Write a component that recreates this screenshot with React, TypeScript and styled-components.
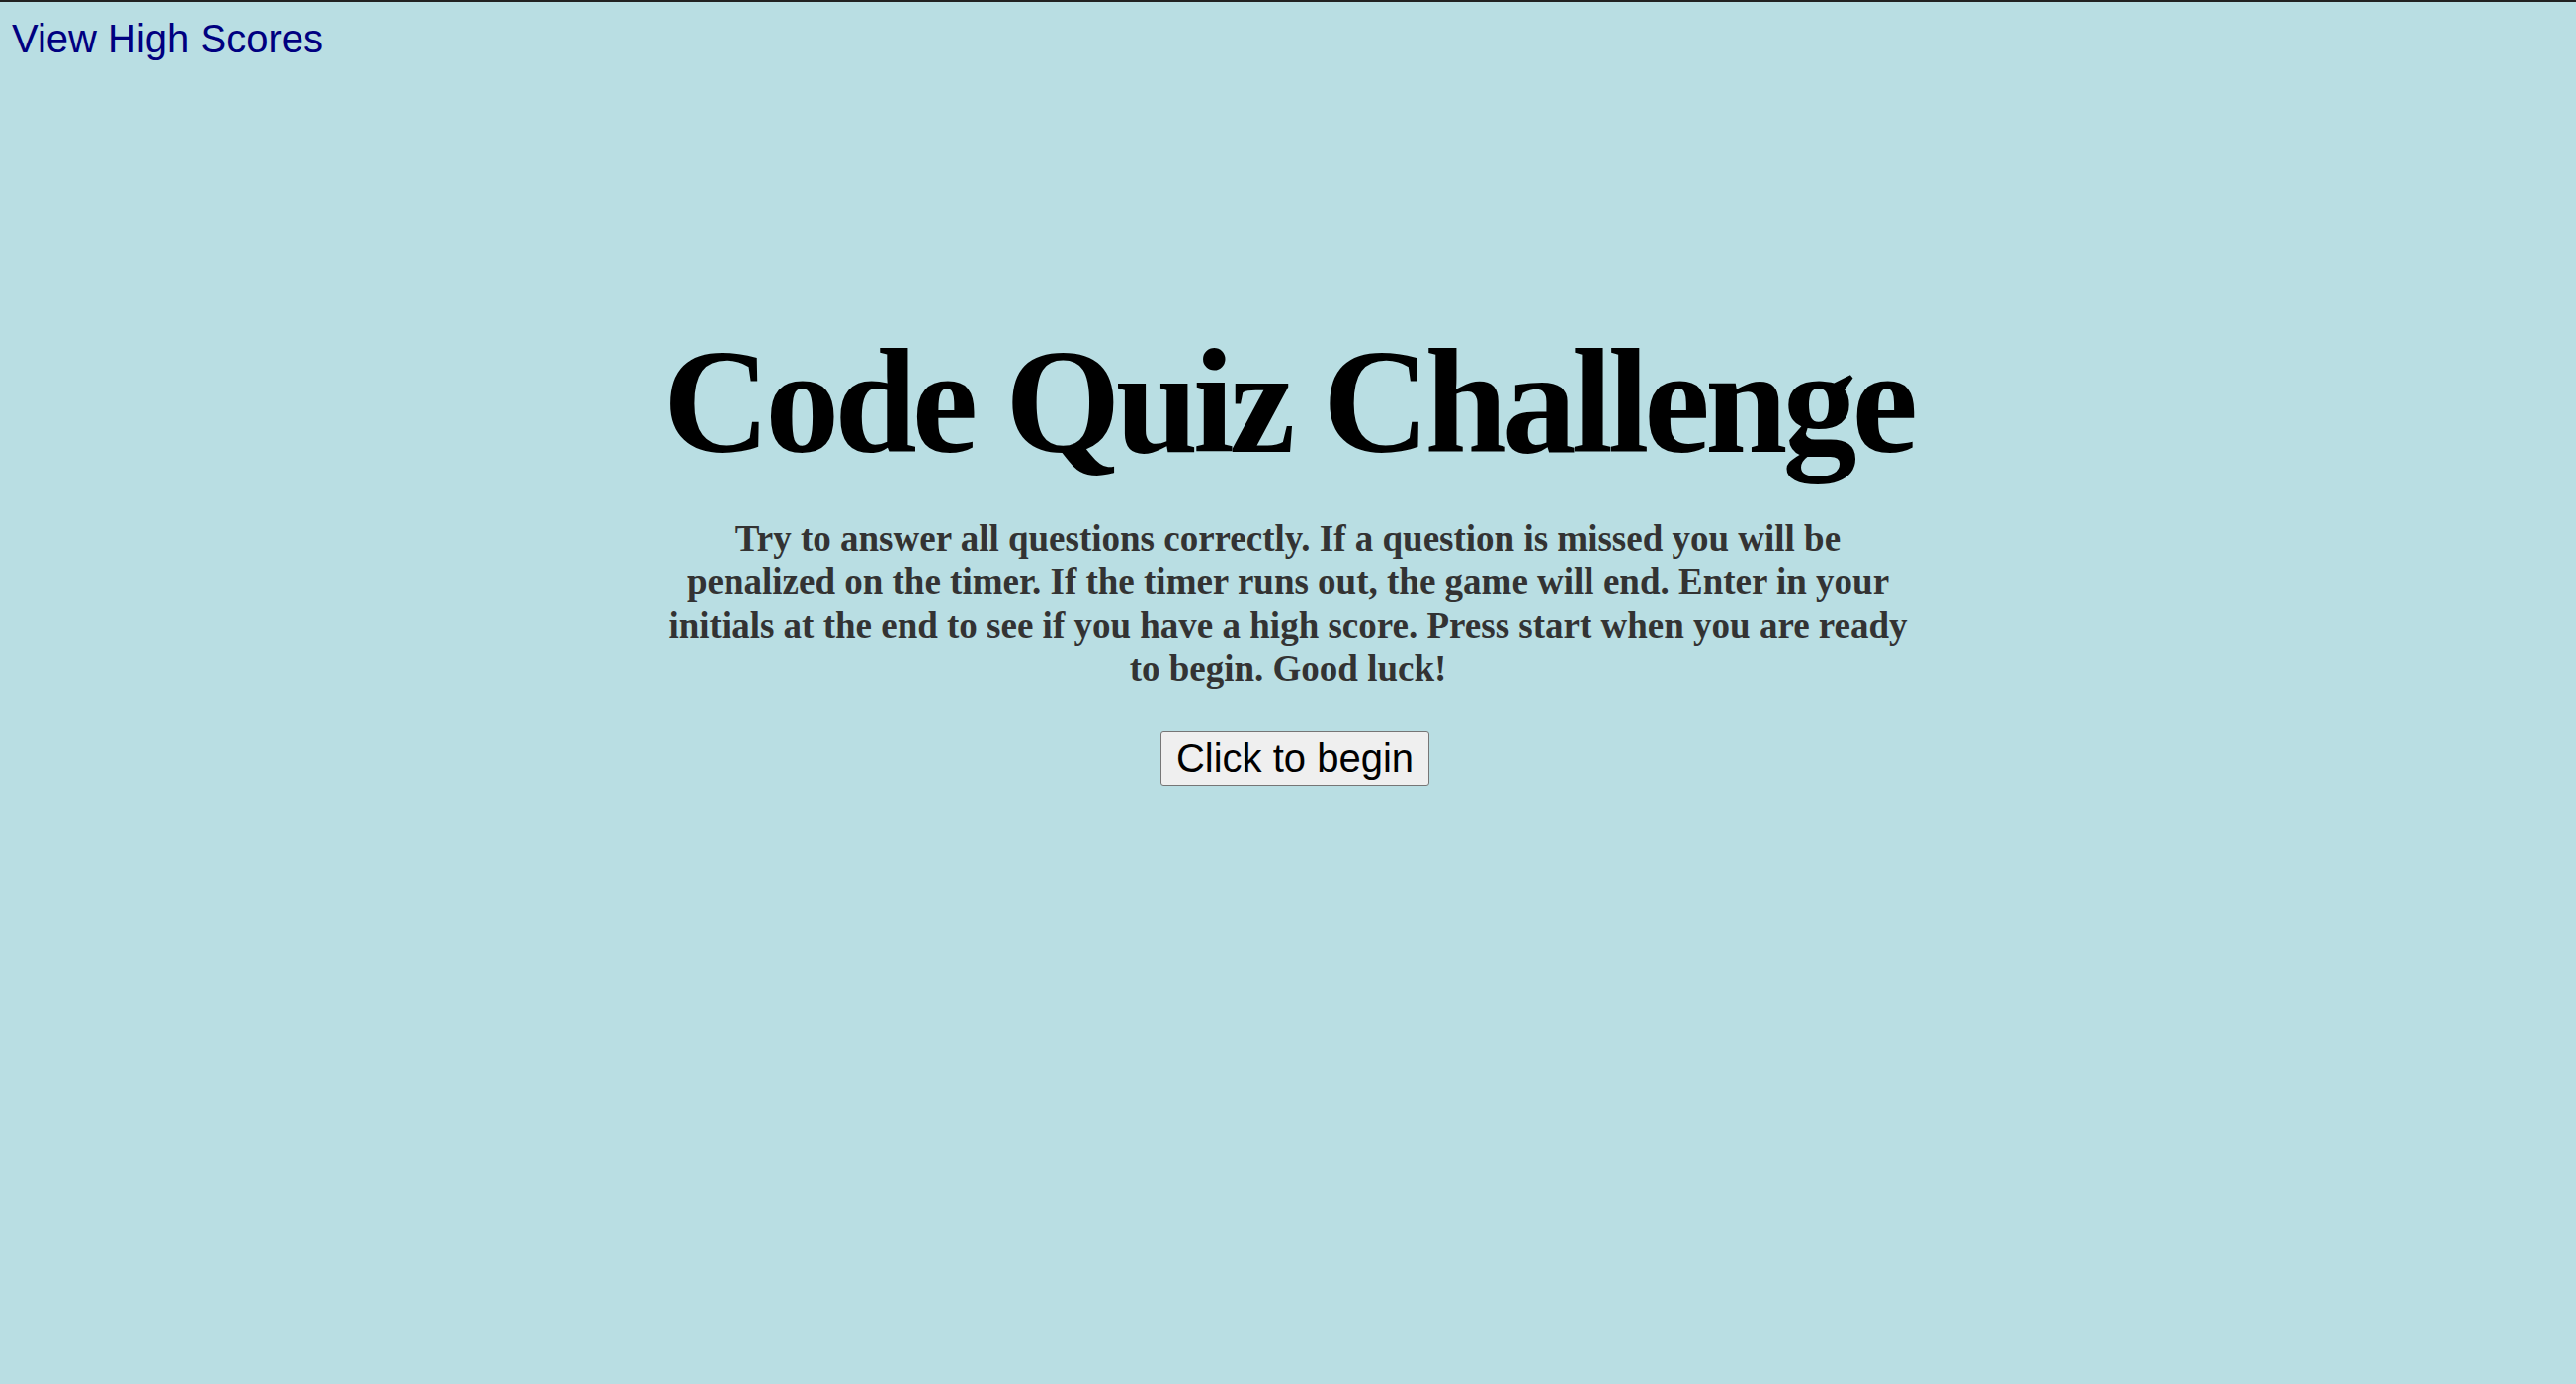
import React from "react";
import styled, { createGlobalStyle } from "styled-components";

const GlobalStyle = createGlobalStyle`
  html, body {
    margin: 0;
    padding: 0;
  }
  body {
    background: #b9dee3;
    border-top: 2px solid #222222;
    min-height: 1398px;
    font-family: "Liberation Serif", "Times New Roman", serif;
  }
`;

const Header = styled.header`
  display: flex;
  padding: 14px 12px 0;
`;

const HighScoresLink = styled.a`
  font-family: "Liberation Sans", Arial, sans-serif;
  font-size: 40px;
  line-height: 46px;
  color: #000080;
  text-decoration: none;
  cursor: pointer;
`;

const Main = styled.main`
  display: flex;
  flex-direction: column;
  align-items: center;
  margin: 258px auto 0;
  width: 1265px;
  text-align: center;
`;

const Title = styled.h1`
  margin: 0;
  font-size: 150px;
  font-weight: 700;
  line-height: normal;
  letter-spacing: -0.033em;
  white-space: nowrap;
  color: #000;
`;

const Intro = styled.p`
  margin: 31px 0 0;
  font-size: 37px;
  line-height: 44px;
  font-weight: 700;
  color: #333333;
`;

const StartButton = styled.button`
  margin: 40px 0 0 14px;
  font-family: "Liberation Sans", Arial, sans-serif;
  font-size: 40px;
  line-height: 46px;
  padding: 4px 15px;
  background: #efefef;
  color: #000;
  border: 1px solid #767676;
  border-radius: 3px;
  cursor: pointer;
`;

export default function App() {
  return (
    <>
      <GlobalStyle />
      <Header>
        <HighScoresLink href="#">View High Scores</HighScoresLink>
      </Header>
      <Main>
        <Title>Code Quiz Challenge</Title>
        <Intro>
          Try to answer all questions correctly. If a question is missed you will be
          penalized on the timer. If the timer runs out, the game will end. Enter in your
          initials at the end to see if you have a high score. Press start when you are
          ready to begin. Good luck!
        </Intro>
        <StartButton>Click to begin</StartButton>
      </Main>
    </>
  );
}
